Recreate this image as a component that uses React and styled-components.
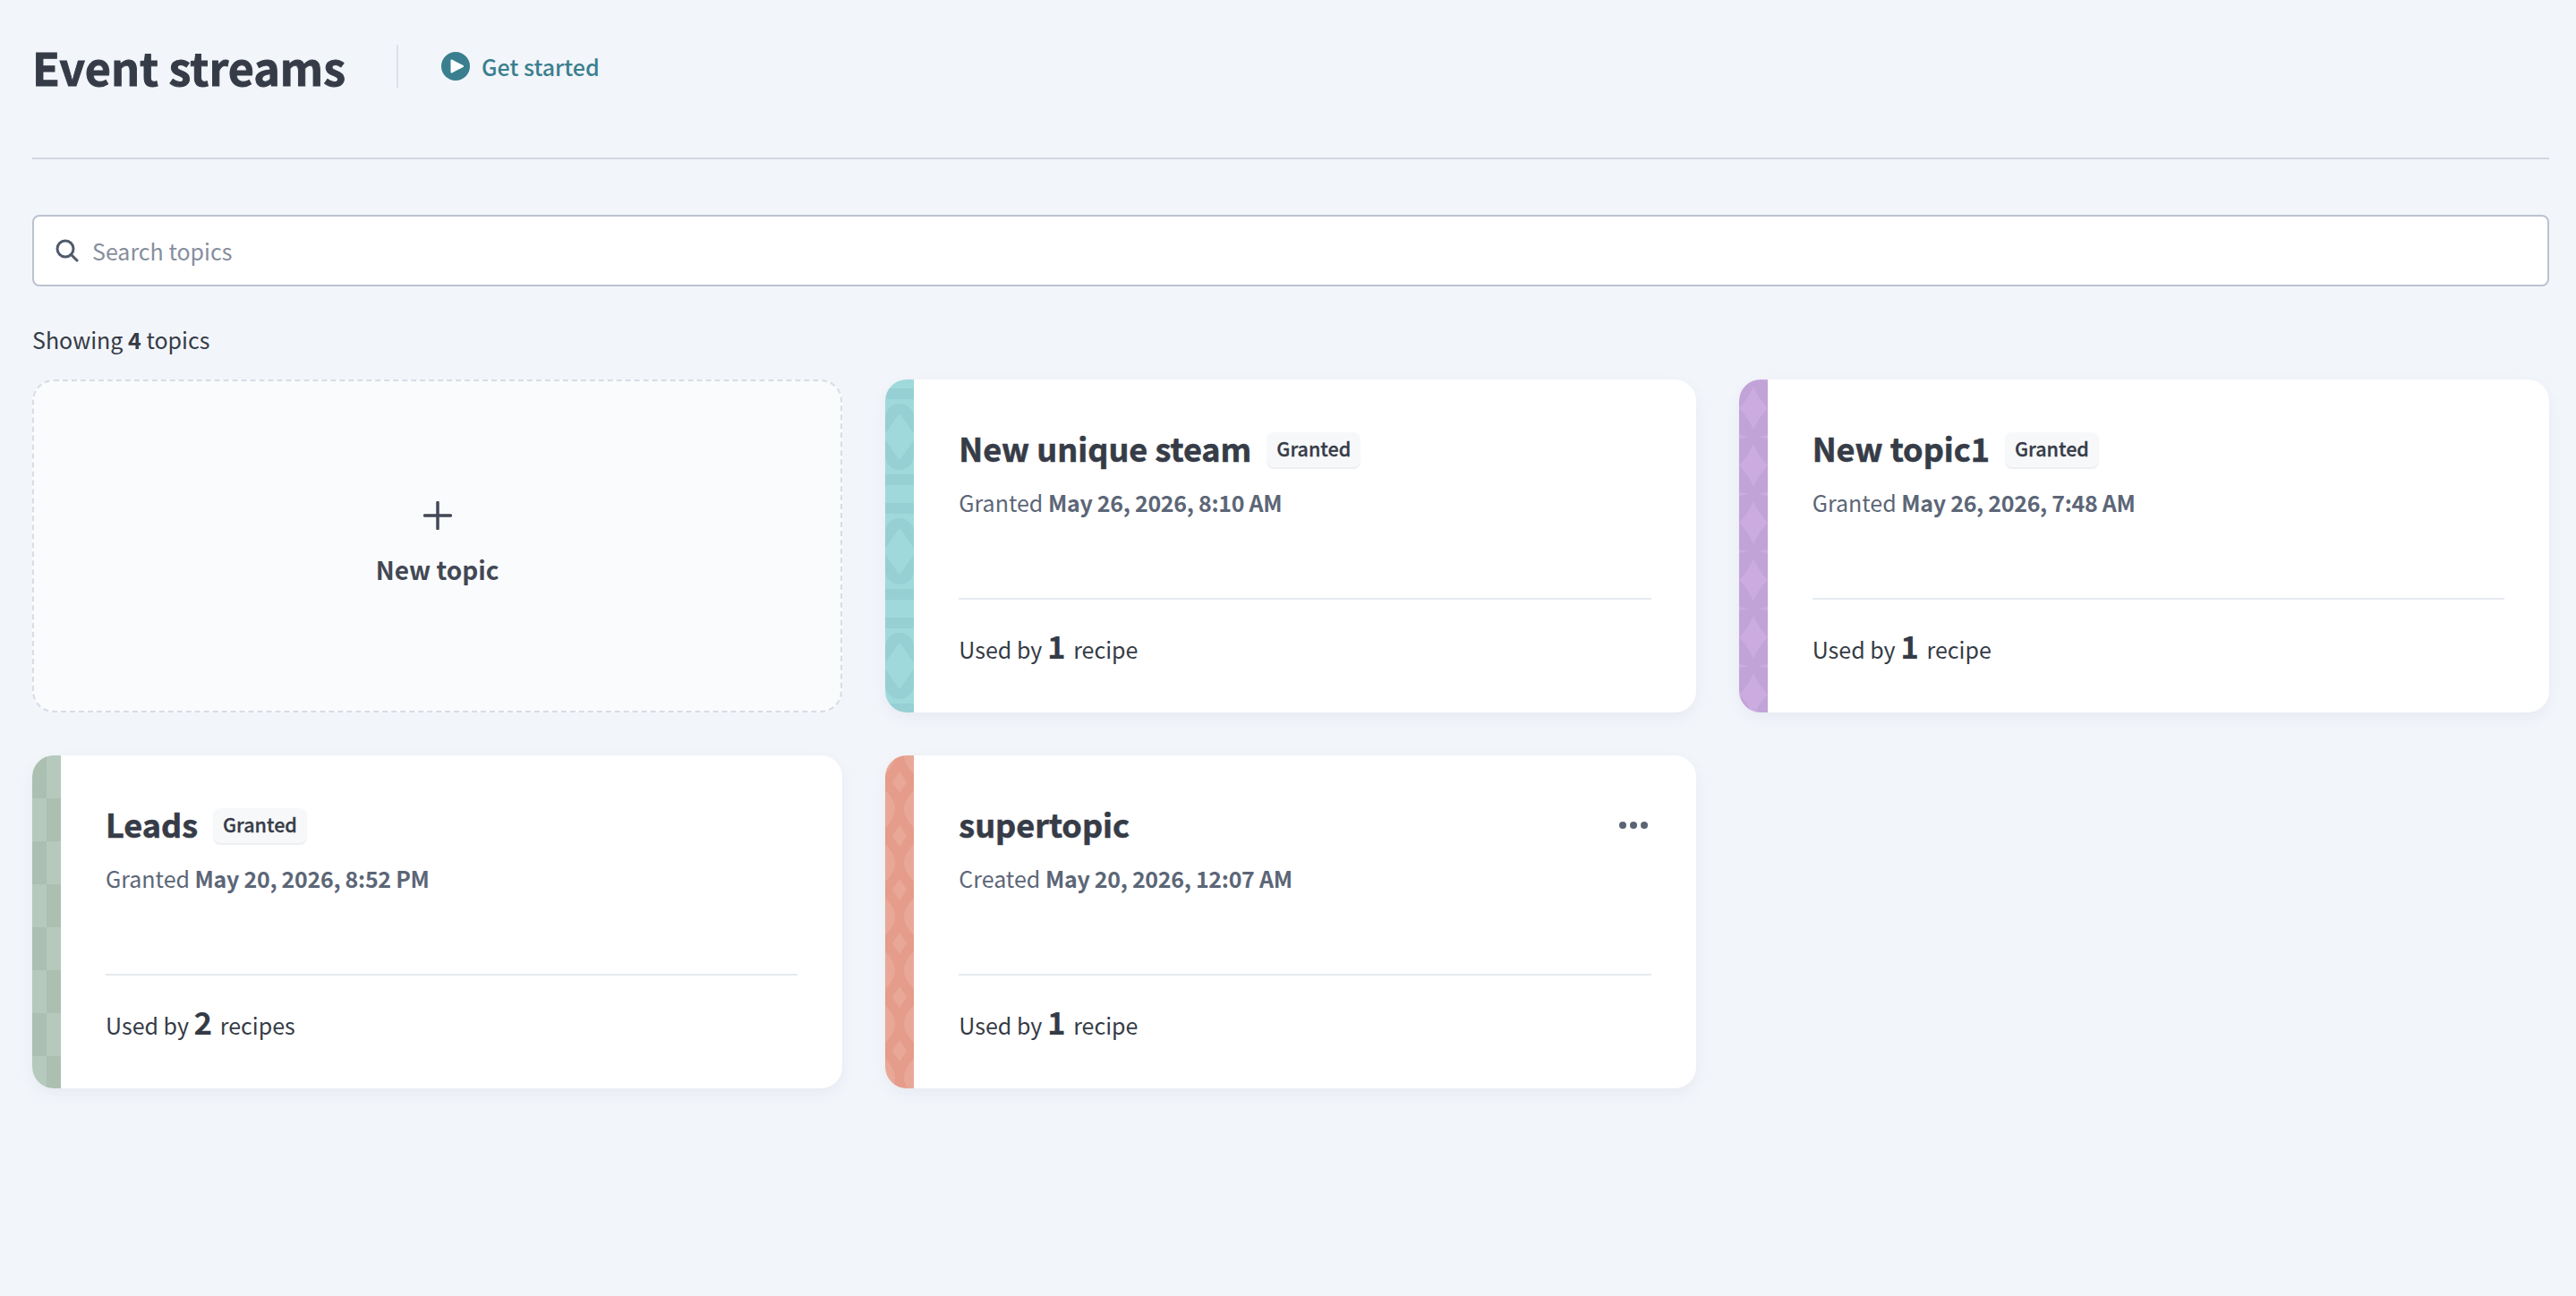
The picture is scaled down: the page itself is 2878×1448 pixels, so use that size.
import styled, { createGlobalStyle } from 'styled-components'

const GlobalStyle = createGlobalStyle`
  html, body {
    margin: 0;
    padding: 0;
    background: #f2f5fa;
  }
  body {
    font-family: "Noto Sans CJK SC", "Noto Sans", sans-serif;
    color: #353b46;
  }
  * {
    box-sizing: border-box;
  }
`

const Page = styled.div`
  min-height: 1448px;
  padding: 50px 30px 0 36px;
`

const Header = styled.header`
  display: flex;
  align-items: center;
  height: 48px;
  margin-bottom: 78px;
`

const Title = styled.h1`
  margin: 0;
  font-size: 50.2px;
  line-height: 48px;
  font-weight: 700;
  -webkit-text-stroke: 0.9px #363c47;
  color: #363c47;
`

const HeaderDivider = styled.div`
  width: 2px;
  height: 48px;
  margin: 0 48px 0 57px;
  background: #dde1e8;
`

const GetStarted = styled.a`
  display: flex;
  align-items: center;
  gap: 13px;
  font-size: 25px;
  line-height: 32px;
  font-weight: 500;
  color: #3a7f8f;
`

const Rule = styled.hr`
  height: 2px;
  margin: 0 0 62px;
  border: 0;
  background: #d2d6df;
`

const SearchBox = styled.label`
  display: flex;
  align-items: center;
  gap: 15px;
  height: 80px;
  padding: 0 24px;
  background: #fff;
  border: 2px solid #bcc2d0;
  border-radius: 8px;
`

const SearchInput = styled.input`
  flex: 1;
  border: 0;
  outline: 0;
  padding: 0;
  background: transparent;
  font: inherit;
  font-size: 25px;
  line-height: 36px;
  color: #353b46;

  &::placeholder {
    color: #868e9d;
    opacity: 1;
  }
`

const Count = styled.p`
  margin: 39px 0 25px;
  font-size: 25px;
  line-height: 40px;
  color: #353b46;

  & b {
    font-weight: 700;
  }
`

const Grid = styled.div`
  display: grid;
  grid-template-columns: repeat(3, 1fr);
  grid-auto-rows: 372px;
  gap: 48px;
`

const NewCard = styled.button`
  display: flex;
  flex-direction: column;
  align-items: center;
  justify-content: center;
  gap: 24px;
  padding: 0 0 5px;
  background: #fafbfd;
  border: 2px dashed #d8dce5;
  border-radius: 24px;
  font: inherit;
  font-size: 28px;
  line-height: 40px;
  font-weight: 700;
  color: #424854;
`

const Card = styled.article`
  display: flex;
  overflow: hidden;
  background: #fff;
  border-radius: 24px;
  box-shadow: 0 6px 16px rgba(60, 75, 110, 0.06);
`

const StripeSvg = styled.svg`
  flex: none;
  display: block;
  width: 32px;
  height: 100%;
`

const CardBody = styled.div`
  position: relative;
  flex: 1;
  min-width: 0;
  display: flex;
  flex-direction: column;
  padding: 0 50px;
`

const TitleRow = styled.div`
  display: flex;
  align-items: center;
  gap: 17px;
  height: 40px;
  margin-top: 58px;
`

const CardTitle = styled.h2`
  margin: 0 0 5px;
  font-size: 36px;
  line-height: 36px;
  font-weight: 700;
  -webkit-text-stroke: 0.6px #363c47;
  color: #363c47;
`

const Badge = styled.span`
  display: block;
  height: 39px;
  padding: 0 11px;
  font-size: 21.5px;
  line-height: 36px;
  font-weight: 500;
  -webkit-text-stroke: 0.3px #363c47;
  color: #363c47;
  background: #f7f8fa;
  border-radius: 8px;
  box-shadow: 0 2px 0 #eceef2;
`

const DateLine = styled.p`
  margin: 19px 0 0;
  font-size: 25px;
  line-height: 40px;
  color: #5c6677;

  & b {
    font-weight: 700;
    letter-spacing: -0.3px;
  }
`

const CardRule = styled.hr`
  width: 100%;
  height: 2px;
  margin: 87px 0 0;
  border: 0;
  background: #e6eaf0;
`

const UsedBy = styled.p`
  margin: 27px 0 0;
  font-size: 25px;
  line-height: 48px;
  color: #353b46;

  & b {
    margin-right: 3px;
    font-size: 35px;
    font-weight: 700;
  }
`

const MenuButton = styled.button`
  position: absolute;
  top: 68px;
  right: 54px;
  display: flex;
  gap: 4px;
  padding: 6px 0;
  border: 0;
  background: transparent;
`

const Dot = styled.span`
  width: 8px;
  height: 8px;
  border-radius: 50%;
  background: #5a6475;
`

function PlayIcon() {
  return (
    <svg width="32" height="32" viewBox="0 0 32 32">
      <circle cx="16" cy="16" r="16" fill="#3a7f8f" />
      <path d="M11.5 9.5 L24 16 L11.5 22.5 Z" fill="#fff" stroke="#fff" strokeWidth="2" strokeLinejoin="round" />
    </svg>
  )
}

function SearchIcon() {
  return (
    <svg width="26" height="26" viewBox="0 0 26 26" fill="none" stroke="#505a6c" strokeWidth="3" strokeLinecap="round">
      <circle cx="11" cy="11" r="9" />
      <path d="M17.5 17.5 L24 24" />
    </svg>
  )
}

function PlusIcon() {
  return (
    <svg width="32" height="32" viewBox="0 0 32 32" stroke="#424854" strokeWidth="3.5" strokeLinecap="round">
      <path d="M16 1.5 V30.5 M1.5 16 H30.5" />
    </svg>
  )
}

// one repeating tile per topic colour
const patterns = {
  teal: {
    width: 32,
    height: 128,
    tile: (
      <>
        <rect width="32" height="128" fill="#9fd9db" />
        <rect y="10" width="32" height="12" fill="#96cfd4" />
        <rect y="106" width="32" height="12" fill="#96cfd4" />
        <rect y="27" width="32" height="74" rx="16" fill="#96cfd4" />
        <path d="M16 41 L32 64 L16 87 L0 64 Z" fill="#9fd9db" stroke="#9fd9db" strokeWidth="4" strokeLinejoin="round" />
      </>
    ),
  },
  purple: {
    width: 32,
    height: 64,
    tile: (
      <>
        <rect width="32" height="64" fill="#c2a3d8" />
        <path d="M16 8 Q22 22 32 32 Q22 42 16 56 Q10 42 0 32 Q10 22 16 8 Z" fill="#cbabe0" />
        <path d="M0 -2 Q6 -1 10 0 Q6 1 0 2 Z M32 -2 Q26 -1 22 0 Q26 1 32 2 Z" fill="#cbabe0" />
        <path d="M0 62 Q6 63 10 64 Q6 65 0 66 Z M32 62 Q26 63 22 64 Q26 65 32 66 Z" fill="#cbabe0" />
      </>
    ),
  },
  green: {
    width: 32,
    height: 96,
    tile: (
      <>
        <rect width="32" height="96" fill="#b5cabc" />
        <rect width="16" height="48" fill="#acc0b2" />
        <rect x="16" y="48" width="16" height="48" fill="#acc0b2" />
      </>
    ),
  },
  red: {
    width: 32,
    height: 60,
    tile: (
      <>
        <rect width="32" height="60" fill="#e59c8a" />
        <path d="M16 18 L24 30 L16 42 L8 30 Z" fill="#e9a897" />
        <path d="M0 39 Q11 50 11 60 Q11 70 0 81 Z M32 39 Q21 50 21 60 Q21 70 32 81 Z" fill="#e9a897" />
        <path d="M0 -21 Q11 -10 11 0 Q11 10 0 21 Z M32 -21 Q21 -10 21 0 Q21 10 32 21 Z" fill="#e9a897" />
      </>
    ),
  },
}

function Stripe({ kind }) {
  const p = patterns[kind]
  return (
    <StripeSvg>
      <defs>
        <pattern id={'stripe-' + kind} width={p.width} height={p.height} patternUnits="userSpaceOnUse">
          {p.tile}
        </pattern>
      </defs>
      <rect width="100%" height="100%" fill={`url(#stripe-${kind})`} />
    </StripeSvg>
  )
}

const topics = [
  { name: 'New unique steam', kind: 'teal', granted: true, verb: 'Granted', date: 'May 26, 2026, 8:10 AM', count: 1 },
  { name: 'New topic1', kind: 'purple', granted: true, verb: 'Granted', date: 'May 26, 2026, 7:48 AM', count: 1 },
  { name: 'Leads', kind: 'green', granted: true, verb: 'Granted', date: 'May 20, 2026, 8:52 PM', count: 2 },
  { name: 'supertopic', kind: 'red', granted: false, verb: 'Created', date: 'May 20, 2026, 12:07 AM', count: 1 },
]

function App() {
  return (
    <Page>
      <GlobalStyle />
      <Header>
        <Title>Event streams</Title>
        <HeaderDivider />
        <GetStarted>
          <PlayIcon />
          Get started
        </GetStarted>
      </Header>
      <Rule />
      <SearchBox>
        <SearchIcon />
        <SearchInput placeholder="Search topics" />
      </SearchBox>
      <Count>
        Showing <b>4</b> topics
      </Count>
      <Grid>
        <NewCard>
          <PlusIcon />
          New topic
        </NewCard>
        {topics.map((t) => (
          <Card key={t.name}>
            <Stripe kind={t.kind} />
            <CardBody>
              <TitleRow>
                <CardTitle>{t.name}</CardTitle>
                {t.granted && <Badge>Granted</Badge>}
              </TitleRow>
              <DateLine>
                {t.verb} <b>{t.date}</b>
              </DateLine>
              <CardRule />
              <UsedBy>
                Used by <b>{t.count}</b> {t.count === 1 ? 'recipe' : 'recipes'}
              </UsedBy>
              {!t.granted && (
                <MenuButton aria-label="More">
                  <Dot />
                  <Dot />
                  <Dot />
                </MenuButton>
              )}
            </CardBody>
          </Card>
        ))}
      </Grid>
    </Page>
  )
}

export default App
